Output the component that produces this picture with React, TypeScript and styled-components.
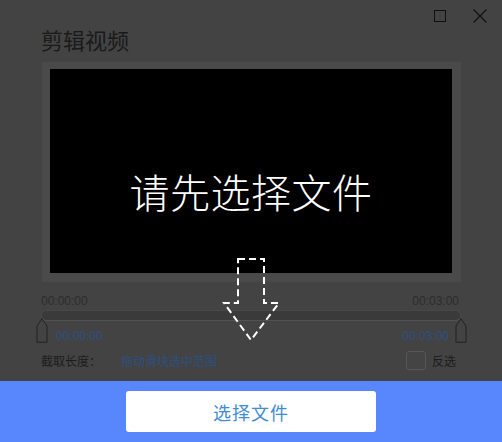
import React from "react";
import styled, { createGlobalStyle } from "styled-components";

const CJK = `"Noto Sans CJK SC", "Noto Sans", sans-serif`;
const DIM_BLUE = "#2e5080";

const GlobalStyle = createGlobalStyle`
  html, body {
    margin: 0;
    padding: 0;
    background: #434343;
  }
  * {
    box-sizing: border-box;
  }
`;

const Window = styled.div`
  width: 502px;
  height: 442px;
  background: #434343;
  display: flex;
  flex-direction: column;
  font-family: ${CJK};
  overflow: hidden;
`;

const Controls = styled.div`
  height: 24px;
  display: flex;
  justify-content: flex-end;
  align-items: flex-start;
  gap: 27px;
  padding: 9px 15px 0 0;
`;

const MaxBox = styled.div`
  width: 12px;
  height: 12px;
  margin-top: 1px;
  border: 1px solid #111;
`;

const CloseIcon = styled.svg`
  width: 14px;
  height: 14px;
  display: block;
`;

const Title = styled.h1`
  margin: 0 0 0 41px;
  font-size: 22px;
  line-height: 30px;
  font-weight: 400;
  color: #1a1a1a;
`;

const Content = styled.div`
  position: relative;
  margin-top: 8px;
  padding: 0 41px;
`;

const Frame = styled.div`
  margin-left: 1px;
  height: 220px;
  padding: 7px 9px 9px 8px;
  background: #4a4a4a;
`;

const Screen = styled.div`
  height: 100%;
  padding-top: 40px;
  background: #000;
  display: flex;
  align-items: center;
  justify-content: center;
  color: #fff;
  font-size: 40px;
  font-weight: 300;
  letter-spacing: 0.5px;
`;

const TimeRow = styled.div<{ $tone: "dark" | "blue" }>`
  display: flex;
  justify-content: space-between;
  height: 14px;
  line-height: 14px;
  font-family: "Liberation Sans", Arial, sans-serif;
  font-size: 12px;
  color: ${(p) => (p.$tone === "blue" ? DIM_BLUE : "#2c2c2c")};
`;

const TopTimes = styled(TimeRow)`
  margin-top: 12px;
  padding-right: 2px;
`;

const BottomTimes = styled(TimeRow)`
  margin-top: 8px;
  padding: 0 12px 0 15px;
`;

const Slider = styled.div`
  position: relative;
  margin-top: 2px;
  height: 11px;
  border-radius: 6px;
  background: #3a3a3a;
  border: 1px solid #484848;
  border-bottom-color: #525252;
`;

const Handle = styled.svg<{ $side: "left" | "right" }>`
  position: absolute;
  top: 7px;
  ${(p) => (p.$side === "left" ? "left: -6px;" : "right: -7px;")}
  width: 12px;
  height: 25px;
  display: block;
`;

const InfoRow = styled.div`
  margin-top: 8px;
  height: 19px;
  display: flex;
  align-items: center;
  justify-content: space-between;
  padding-right: 5px;
  font-size: 12px;
`;

const InfoLabel = styled.span`
  color: #1c1c1c;
  width: 80px;
`;

const InfoHint = styled.span`
  color: ${DIM_BLUE};
  flex: 1;
`;

const Invert = styled.label`
  display: flex;
  align-items: center;
  gap: 6px;
  color: #1c1c1c;
`;

const CheckBox = styled.span`
  width: 20px;
  height: 19px;
  border: 1px solid #575757;
  border-radius: 3px;
  background: #444;
`;

const DropHint = styled.svg`
  position: absolute;
  left: 222px;
  top: 194px;
  width: 60px;
  height: 88px;
  pointer-events: none;
`;

const Footer = styled.div`
  margin-top: auto;
  height: 61px;
  background: #5886fc;
  display: flex;
  align-items: center;
  justify-content: center;
`;

const PickButton = styled.button`
  width: 250px;
  height: 41px;
  border: none;
  border-radius: 3px;
  background: #fff;
  color: #3f8bd6;
  font-family: ${CJK};
  font-size: 18px;
  letter-spacing: 1px;
  cursor: pointer;
`;

const HandleShape = ({ side }: { side: "left" | "right" }) => (
  <Handle $side={side} viewBox="0 0 12 25">
    <path
      d="M6 0.8 L11 8 L11 24.3 L1 24.3 L1 8 Z"
      fill="#434343"
      stroke="#222"
      strokeWidth="1"
      strokeLinejoin="round"
    />
  </Handle>
);

export default function App() {
  return (
    <>
      <GlobalStyle />
      <Window>
        <Controls>
          <MaxBox />
          <CloseIcon viewBox="0 0 14 14">
            <path d="M0.5 0.5 L13.5 13.5 M13.5 0.5 L0.5 13.5" stroke="#111" strokeWidth="1.2" />
          </CloseIcon>
        </Controls>
        <Title>剪辑视频</Title>

        <Content>
          <Frame>
            <Screen>请先选择文件</Screen>
          </Frame>

          <TopTimes $tone="dark">
            <span>00:00:00</span>
            <span>00:03:00</span>
          </TopTimes>

          <Slider>
            <HandleShape side="left" />
            <HandleShape side="right" />
          </Slider>

          <BottomTimes $tone="blue">
            <span>00:00:00</span>
            <span>00:03:00</span>
          </BottomTimes>

          <InfoRow>
            <InfoLabel>截取长度：</InfoLabel>
            <InfoHint>拖动滑块选中范围</InfoHint>
            <Invert>
              <CheckBox />
              反选
            </Invert>
          </InfoRow>

          <DropHint viewBox="0 0 60 88">
            <path
              d="M16 3 L42 3 L42 47 L57 47 L29 84 L2 47 L16 47 Z"
              fill="none"
              stroke="#fff"
              strokeWidth="2"
              strokeDasharray="7 4"
              strokeLinejoin="miter"
            />
          </DropHint>
        </Content>

        <Footer>
          <PickButton>选择文件</PickButton>
        </Footer>
      </Window>
    </>
  );
}
